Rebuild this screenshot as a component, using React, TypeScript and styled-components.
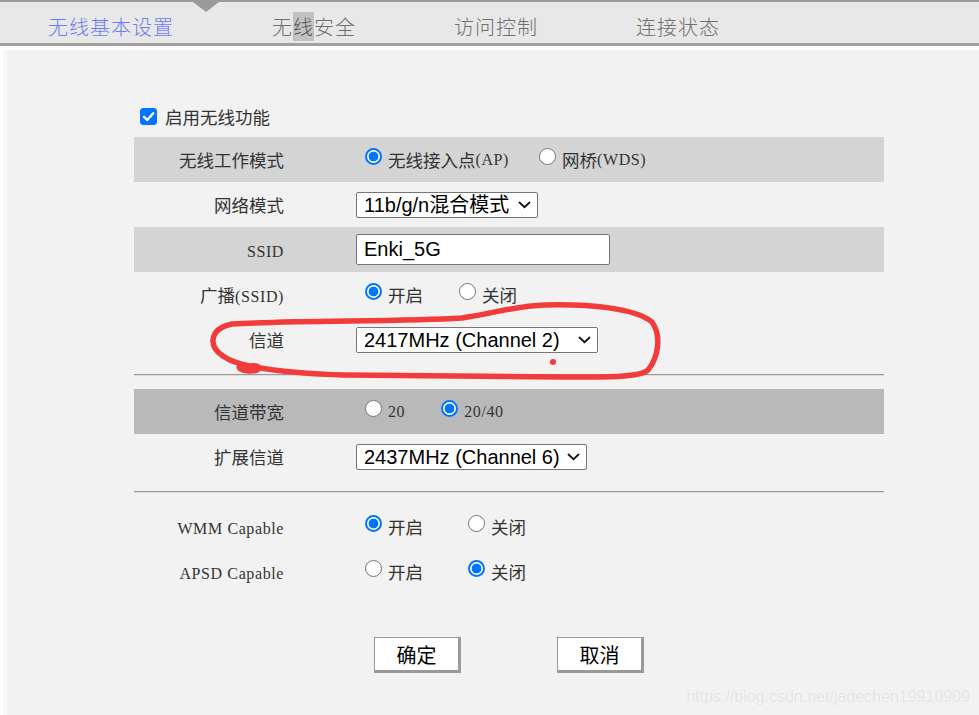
import React from 'react';
import styled, { createGlobalStyle } from 'styled-components';

const Global = createGlobalStyle`
  html, body { margin: 0; padding: 0; background: #ffffff; }
  body { font-family: "Noto Sans CJK SC", sans-serif; }
  * { box-sizing: border-box; }
`;

const Page = styled.div`
  position: relative;
  width: 979px;
  height: 715px;
  overflow: hidden;
  background: #ffffff;
`;

const TabBar = styled.nav`
  position: relative;
  height: 46px;
  background: #e8e8e8;
  border-top: 2px solid #9a9a9a;
  border-bottom: 3px solid #a0a0a0;
  display: flex;
  align-items: flex-start;
  gap: 98px;
  padding: 15px 0 0 48px;
`;

const Pointer = styled.span`
  position: absolute;
  left: 193px;
  top: 0;
  width: 0;
  height: 0;
  border-left: 13px solid transparent;
  border-right: 13px solid transparent;
  border-top: 10px solid #9a9a9a;
`;

const Tab = styled.span<{ $active?: boolean }>`
  font-family: "Noto Sans CJK SC", sans-serif;
  font-weight: 300;
  font-size: 20px;
  line-height: 20px;
  letter-spacing: 1px;
  color: ${(p) => (p.$active ? '#6d7bf8' : '#6f6f6f')};
  white-space: nowrap;
`;

const Selected = styled.span`
  background: #c2c2c2;
  color: #555;
`;

const Panel = styled.main`
  margin-top: 4px;
  margin-left: 3px;
  height: 665px;
  background: #f2f2f2;
  border-left: 4px solid #f8f8f8;
  padding: 51px 0 0 127px;
`;

const Form = styled.form`
  width: 750px;
  display: flex;
  flex-direction: column;
`;

const EnableRow = styled.label`
  display: flex;
  align-items: center;
  height: 30px;
  margin-bottom: 6px;
  padding-left: 6px;
  gap: 8px;
  font-size: 17.5px;
  color: #333;
`;

const Check = styled.input`
  appearance: none;
  width: 17px;
  height: 17px;
  margin: 0 0 2px 0;
  border-radius: 3px;
  border: 1px solid #767676;
  background: #fff;
  display: grid;
  place-items: center;
  &:checked {
    border-color: #0075ff;
    background: #0075ff;
  }
`;

const CheckBox = styled.span`
  position: relative;
  display: inline-flex;
  width: 17px;
  height: 17px;
`;

const CheckMark = styled.svg`
  position: absolute;
  left: 0;
  top: 0;
  pointer-events: none;
`;

const Row = styled.div<{ $tone?: 'light' | 'dark' }>`
  display: grid;
  grid-template-columns: 150px 1fr;
  column-gap: 72px;
  align-items: center;
  height: 45px;
  background: ${(p) =>
    p.$tone === 'light' ? '#d4d4d4' : p.$tone === 'dark' ? '#b9b9b9' : 'transparent'};
`;

const Label = styled.span`
  text-align: right;
  font-size: 17.5px;
  color: #333;
  white-space: nowrap;
`;

const Latin = styled.span`
  font-family: "Liberation Serif", serif;
  font-size: 16px;
  letter-spacing: 0.6px;
`;

const Value = styled.div`
  display: flex;
  align-items: center;
`;

const Option = styled.label<{ $after?: number }>`
  display: inline-flex;
  align-items: center;
  margin-right: ${(p) => p.$after ?? 0}px;
  font-size: 17.5px;
  color: #333;
  white-space: nowrap;
`;

const Radio = styled.input`
  appearance: none;
  flex: none;
  width: 17px;
  height: 17px;
  margin: 0 6px 6px 9px;
  border-radius: 50%;
  border: 1.5px solid #767676;
  background: #fff;
  &:checked {
    border: 2px solid #0075ff;
    background: radial-gradient(circle, #0075ff 0 4.6px, #ffffff 5.2px);
  }
`;

const TextInput = styled.input`
  width: 254px;
  height: 31px;
  border: 1px solid #767676;
  border-radius: 2px;
  padding: 0 7px;
  font-family: "Liberation Sans", Arial, sans-serif;
  font-size: 20px;
  color: #000;
  background: #fff;
`;

const SelectWrap = styled.span`
  position: relative;
  display: inline-block;
`;

const Select = styled.select<{ $w: number }>`
  appearance: none;
  width: ${(p) => p.$w}px;
  height: 26px;
  border: 1px solid #767676;
  border-radius: 2px;
  background: #fff;
  padding: 0 0 0 7px;
  font-family: "Liberation Sans", "Noto Sans CJK SC", Arial, sans-serif;
  font-size: 20px;
  line-height: 24px;
  color: #000;
`;

const Chevron = styled.svg`
  position: absolute;
  right: 7px;
  top: 50%;
  transform: translateY(-50%);
  pointer-events: none;
`;

const Divider = styled.hr<{ $after: number }>`
  width: 750px;
  height: 0;
  margin: 12px 0 ${(p) => p.$after}px 0;
  border: none;
  border-top: 1px solid #9a9a9a;
  border-bottom: 1px solid #dcdcdc;
`;

const ButtonRow = styled.div`
  display: flex;
  gap: 96px;
  padding-left: 240px;
  margin-top: 43px;
`;

const Button = styled.button`
  width: 87px;
  height: 36px;
  padding: 0;
  background: #fff;
  border: 1px solid #9a9a9a;
  border-right-width: 3px;
  border-bottom-width: 3px;
  font-family: "Noto Sans CJK SC", sans-serif;
  font-size: 20px;
  color: #000;
`;

const Watermark = styled.span`
  position: absolute;
  right: 9px;
  bottom: 9px;
  font-family: "Liberation Sans", Arial, sans-serif;
  font-size: 16px;
  color: #e2e2e2;
  text-shadow: 0 0 1px #ffffff, 0 0 1px #ffffff;
  pointer-events: none;
`;

const Scribble = styled.svg`
  position: absolute;
  left: 0;
  top: 0;
  pointer-events: none;
`;

function DropDown({ value, width }: { value: string; width: number }) {
  return (
    <SelectWrap>
      <Select $w={width} defaultValue={value}>
        <option value={value}>{value}</option>
      </Select>
      <Chevron width="13" height="8" viewBox="0 0 13 8">
        <path d="M1.5 1.5 L6.5 6.2 L11.5 1.5" fill="none" stroke="#111" strokeWidth="1.8" strokeLinecap="round" />
      </Chevron>
    </SelectWrap>
  );
}

function Choice({
  name,
  checked,
  after,
  children,
}: {
  name: string;
  checked?: boolean;
  after?: number;
  children: React.ReactNode;
}) {
  return (
    <Option $after={after}>
      <Radio type="radio" name={name} defaultChecked={checked} />
      {children}
    </Option>
  );
}

export default function App() {
  return (
    <Page>
      <Global />
      <TabBar>
        <Pointer />
        <Tab $active>无线基本设置</Tab>
        <Tab>
          无<Selected>线</Selected>安全
        </Tab>
        <Tab>访问控制</Tab>
        <Tab>连接状态</Tab>
      </TabBar>
      <Panel>
        <Form onSubmit={(e) => e.preventDefault()}>
          <EnableRow>
            <CheckBox>
              <Check type="checkbox" defaultChecked />
              <CheckMark width="17" height="17" viewBox="0 0 17 17">
                <path d="M4 8.8 L7.2 12 L13.2 5.2" fill="none" stroke="#fff" strokeWidth="2.4" strokeLinecap="round" strokeLinejoin="round" />
              </CheckMark>
            </CheckBox>
            启用无线功能
          </EnableRow>

          <Row $tone="light">
            <Label>无线工作模式</Label>
            <Value>
              <Choice name="mode" checked after={21}>
                无线接入点<Latin>(AP)</Latin>
              </Choice>
              <Choice name="mode">
                网桥<Latin>(WDS)</Latin>
              </Choice>
            </Value>
          </Row>

          <Row>
            <Label>网络模式</Label>
            <Value>
              <DropDown value="11b/g/n混合模式" width={182} />
            </Value>
          </Row>

          <Row $tone="light">
            <Label>
              <Latin>SSID</Latin>
            </Label>
            <Value>
              <TextInput type="text" defaultValue="Enki_5G" />
            </Value>
          </Row>

          <Row>
            <Label>
              广播<Latin>(SSID)</Latin>
            </Label>
            <Value>
              <Choice name="bcast" checked after={27}>
                开启
              </Choice>
              <Choice name="bcast">关闭</Choice>
            </Value>
          </Row>

          <Row>
            <Label>信道</Label>
            <Value>
              <DropDown value="2417MHz (Channel 2)" width={242} />
            </Value>
          </Row>

          <Divider $after={13} />

          <Row $tone="dark">
            <Label>信道带宽</Label>
            <Value>
              <Choice name="bw" after={27}>
                <Latin>20</Latin>
              </Choice>
              <Choice name="bw" checked>
                <Latin>20/40</Latin>
              </Choice>
            </Value>
          </Row>

          <Row>
            <Label>扩展信道</Label>
            <Value>
              <DropDown value="2437MHz (Channel 6)" width={231} />
            </Value>
          </Row>

          <Divider $after={11} />

          <Row>
            <Label>
              <Latin>WMM Capable</Latin>
            </Label>
            <Value>
              <Choice name="wmm" checked after={36}>
                开启
              </Choice>
              <Choice name="wmm">关闭</Choice>
            </Value>
          </Row>

          <Row>
            <Label>
              <Latin>APSD Capable</Latin>
            </Label>
            <Value>
              <Choice name="apsd" after={36}>
                开启
              </Choice>
              <Choice name="apsd" checked>
                关闭
              </Choice>
            </Value>
          </Row>

          <ButtonRow>
            <Button type="submit">确定</Button>
            <Button type="button">取消</Button>
          </ButtonRow>
        </Form>
      </Panel>

      <Scribble width="979" height="715" viewBox="0 0 979 715">
        <path
          d="M232 324 C300 320 400 322 462 318 C500 312 515 306 545 305 C590 304 635 308 652 322 C662 336 658 358 648 370 C640 378 600 377 560 377 L345 375 C300 374 270 370 250 366 C236 363 236 370 248 371 C262 372 262 364 250 366 C228 362 212 352 213 340 C214 330 222 326 232 324 Z"
          fill="none"
          stroke="#f23b3b"
          strokeWidth="5.5"
          strokeLinecap="round"
          strokeLinejoin="round"
        />
        <circle cx="553" cy="362" r="3" fill="#f23b3b" />
      </Scribble>

      <Watermark>https://blog.csdn.net/jadechen19910909</Watermark>
    </Page>
  );
}
